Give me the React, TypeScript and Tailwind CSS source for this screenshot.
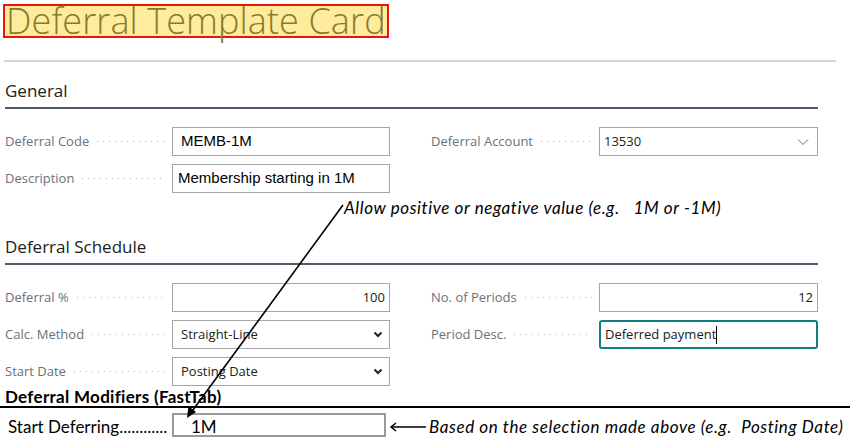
import React from "react";

const seg = { fontFamily: '"Open Sans", "Noto Sans", sans-serif' };
const ari = { fontFamily: '"Liberation Sans", Arial, sans-serif' };
const cal = { fontFamily: 'Lato, "Open Sans", sans-serif' };

function Label({ text, w }: { text: string; w: string }) {
  return (
    <div className={`flex items-center ${w} shrink-0 pr-[7px]`}>
      <span className="text-[13px] text-[#6a707b] whitespace-nowrap" style={seg}>
        {text}
      </span>
      <span className="flex-1 ml-[8px] h-[1px] bg-[linear-gradient(to_right,#b5b5b5_1px,transparent_1px)] bg-[length:6px_1px] bg-repeat-x" />
    </div>
  );
}

function Chevron() {
  return (
    <svg width="12" height="8" viewBox="0 0 12 8" className="shrink-0">
      <path d="M1 1.5 L6 6.5 L11 1.5" fill="none" stroke="#6b6b6b" strokeWidth="1" />
    </svg>
  );
}

function BoldChevron() {
  return (
    <svg width="10" height="7" viewBox="0 0 10 7" className="shrink-0">
      <path d="M1.5 1.5 L5 5 L8.5 1.5" fill="none" stroke="#222" strokeWidth="2" />
    </svg>
  );
}

function Heading({ text }: { text: string }) {
  return (
    <div className="w-[813px] ml-[5px] border-b-2 border-[#505a6b]">
      <div className="text-[17px] text-[#212121] leading-[23px] pb-[5px]" style={seg}>
        {text}
      </div>
    </div>
  );
}

export default function App() {
  return (
    <div className="relative w-[854px] h-[441px] bg-white overflow-hidden">
      {/* Title */}
      <div className="pt-[4px] pl-[3px]">
        <div className="w-[386px] h-[34px] border-2 border-[#e8150f] bg-[#ffeb9c] flex items-center">
          <span
            className="text-[36px] font-light text-[#877a2c] leading-[30px] ml-[1px] whitespace-nowrap tracking-[0.1px]"
            style={seg}
          >
            Deferral Template Card
          </span>
        </div>
      </div>
      <div className="mt-[22px] ml-[4px] w-[832px] h-[2px] bg-[#d2d5da]" />

      {/* General */}
      <div className="mt-[17px]">
        <Heading text="General" />
      </div>

      <div className="mt-[18px] ml-[5px] flex">
        <div className="flex flex-col gap-[8px] w-[385px]">
          <div className="flex h-[29px]">
            <Label text="Deferral Code" w="w-[167px]" />
            <div className="w-[218px] border border-[#a6a6a6] flex items-center pl-[8px] text-[15px] text-black" style={ari}>
              MEMB-1M
            </div>
          </div>
          <div className="flex h-[29px]">
            <Label text="Description" w="w-[167px]" />
            <div className="w-[218px] border border-[#a6a6a6] flex items-center pl-[5px] text-[15px] text-black" style={ari}>
              Membership starting in 1M
            </div>
          </div>
        </div>
        <div className="ml-[41px] flex flex-col">
          <div className="flex h-[29px]">
            <Label text="Deferral Account" w="w-[168px]" />
            <div className="w-[219px] border border-[#a6a6a6] flex items-center justify-between pl-[4px] pr-[8px] text-[13px] text-[#212121]" style={seg}>
              <span>13530</span>
              <Chevron />
            </div>
          </div>
        </div>
      </div>

      {/* annotation 1 */}
      <div className="h-[22px] mt-[4px] pl-[344px] text-[17px] tracking-[0.6px] italic text-black leading-[22px] whitespace-pre" style={cal}>
        {"Allow positive or negative value (e.g.   1M or -1M)"}
      </div>

      {/* Deferral Schedule */}
      <div className="mt-[16px]">
        <Heading text="Deferral Schedule" />
      </div>

      <div className="mt-[18px] ml-[5px] flex">
        <div className="flex flex-col gap-[8px] w-[385px]">
          <div className="flex h-[29px]">
            <Label text="Deferral %" w="w-[167px]" />
            <div className="w-[218px] border border-[#a6a6a6] flex items-center justify-end pr-[4px] text-[13px] text-[#212121]" style={seg}>
              100
            </div>
          </div>
          <div className="flex h-[29px]">
            <Label text="Calc. Method" w="w-[167px]" />
            <div className="w-[218px] border border-[#a6a6a6] flex items-center justify-between pl-[8px] pr-[6px] text-[13px] text-[#212121]" style={seg}>
              <span>Straight-Line</span>
              <BoldChevron />
            </div>
          </div>
          <div className="flex h-[29px]">
            <Label text="Start Date" w="w-[167px]" />
            <div className="w-[218px] border border-[#a6a6a6] flex items-center justify-between pl-[8px] pr-[6px] text-[13px] text-[#212121]" style={seg}>
              <span>Posting Date</span>
              <BoldChevron />
            </div>
          </div>
        </div>
        <div className="ml-[41px] flex flex-col gap-[8px]">
          <div className="flex h-[29px]">
            <Label text="No. of Periods" w="w-[168px]" />
            <div className="w-[219px] border border-[#a6a6a6] flex items-center justify-end pr-[4px] text-[13px] text-[#212121]" style={seg}>
              12
            </div>
          </div>
          <div className="flex h-[29px]">
            <Label text="Period Desc." w="w-[168px]" />
            <div className="w-[219px] border-2 border-[#0f7f83] rounded-[3px] flex items-center pl-[4px] text-[13px] text-[#212121]" style={seg}>
              <span>Deferred payment</span>
              <span className="w-[1px] h-[18px] bg-black" />
            </div>
          </div>
        </div>
      </div>

      {/* FastTab */}
      <div className="mt-[1px] w-[850px] border-b-2 border-black">
        <div className="ml-[5px] text-[17px] tracking-[0.3px] font-bold text-black leading-[20px] -mb-[1px]" style={cal}>
          Deferral Modifiers (FastTab)
        </div>
      </div>
      <div className="mt-[4px] flex items-center">
        <div className="ml-[8px] mt-[4px] w-[164px] text-[17px] text-black leading-[22px] whitespace-nowrap" style={cal}>
          Start Deferring............
        </div>
        <div className="w-[214px] h-[24px] border-2 border-[#9a9a9a] flex items-center pl-[17px] pt-[3px] text-[17px] text-black" style={cal}>
          1M
        </div>
        <svg width="38" height="10" viewBox="0 0 38 10" className="ml-[3px] mt-[3px]">
          <path d="M2 5 H37" stroke="black" strokeWidth="1.5" />
          <path d="M7 1 L2 5 L7 9" stroke="black" strokeWidth="1.5" fill="none" />
        </svg>
        <div className="ml-[2px] mt-[4px] text-[17px] tracking-[0.6px] italic text-black whitespace-pre leading-[22px]" style={cal}>
          {"Based on the selection made above (e.g.  Posting Date)"}
        </div>
      </div>

      {/* diagonal arrow overlay */}
      <svg className="absolute left-0 top-0 pointer-events-none" width="854" height="441">
        <line x1="343" y1="205" x2="190" y2="414" stroke="black" strokeWidth="1.6" />
        <path d="M187 418 L188.5 406 L196 412 Z" fill="black" />
      </svg>
    </div>
  );
}
